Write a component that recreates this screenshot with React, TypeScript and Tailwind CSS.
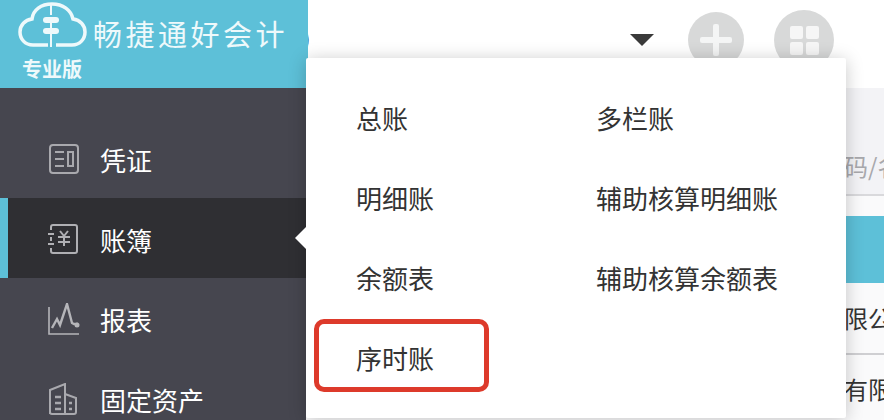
import * as React from "react"

const font = { fontFamily: '"Noto Sans CJK SC", "Noto Sans", sans-serif' }

const IconVoucher = () => (
  <svg width="32" height="32" viewBox="0 0 32 32" fill="none" stroke="#a9a9ae" strokeWidth="2">
    <rect x="2" y="2" width="28" height="28" rx="3" />
    <path d="M7 9h9M7 16h9M7 23h9" />
    <rect x="20" y="9" width="5" height="14" />
  </svg>
)

const IconBook = () => (
  <svg width="32" height="32" viewBox="0 0 32 32" fill="none" stroke="#b0b0b4" strokeWidth="2">
    <path d="M3 7V4a2 2 0 0 1 2-2h22a2 2 0 0 1 2 2v24a2 2 0 0 1-2 2H5a2 2 0 0 1-2-2v-3" />
    <path d="M0 11h6M0 21h6M3 14v4" />
    <path d="M12 8l4 5 4-5M10 14h12M10 19h12M16 13v10" />
  </svg>
)

const IconChart = () => (
  <svg width="32" height="32" viewBox="0 0 32 32" fill="none" stroke="#b5b5b9" strokeWidth="2.4">
    <path d="M1 4v27h30" strokeWidth="1.6" />
    <path d="M4 25l5-9 3 6 7-21 5 19 2 1h4" />
    <circle cx="29" cy="22" r="2.5" fill="#b5b5b9" stroke="none" />
  </svg>
)

const IconBuilding = () => (
  <svg width="30" height="32" viewBox="0 0 30 32" fill="none" stroke="#a9a9ae" strokeWidth="2">
    <path d="M2 31V7l15-6v30M17 11l11 4v14a2 2 0 0 1-2 2H4a2 2 0 0 1-2-2" />
    <path d="M7 14h6M7 20h6M7 26h6M21 20h3M21 26h3" strokeWidth="2.5" />
  </svg>
)

const CloudLogo = () => (
  <svg width="70" height="48" viewBox="0 0 70 48" fill="none" stroke="#eef9fb" strokeWidth="3.5">
    <path d="M30 44H15C7 44 2 38 2 31c0-7 5-12 12-13C15 9 23 3 34 3c11 0 19 6 21 15 7 1 12 6 12 13 0 7-5 13-13 13H38" />
    <path d="M33 3v11M33 33v13" strokeWidth="2" />
    <rect x="25" y="16" width="16" height="6" rx="3" fill="#eef9fb" stroke="none" />
    <rect x="25" y="27" width="16" height="6" rx="3" fill="#eef9fb" stroke="none" />
    <path d="M33 22v5" strokeWidth="2" />
  </svg>
)

const menu = [
  { label: "凭证", icon: <IconVoucher /> },
  { label: "账簿", icon: <IconBook />, active: true },
  { label: "报表", icon: <IconChart /> },
  { label: "固定资产", icon: <IconBuilding /> },
]

const items = ["总账", "多栏账", "明细账", "辅助核算明细账", "余额表", "辅助核算余额表", "序时账"]

const App = () => {
  return (
    <div className="relative flex h-[420px] w-[884px] overflow-hidden bg-white" style={font}>
      <aside className="z-10 flex h-full w-[306px] shrink-0 flex-col bg-[#46464f]">
        <div className="h-[88px] w-[308px] shrink-0 bg-[#5dc0d8] pl-[18px] pt-[1px] text-[#eef9fb]">
          <div className="flex items-center">
            <CloudLogo />
            <span className="ml-[5px] mt-[17px] text-[29px] leading-none tracking-[3.5px]">畅捷通好会计</span>
          </div>
          <p className="ml-[4px] mt-[9px] text-[20px] leading-[22px] font-bold">专业版</p>
        </div>
        <nav className="pt-[30px]">
          {menu.map((m) => (
            <div
              key={m.label}
              className={
                m.active
                  ? "flex h-20 items-center border-l-8 border-[#5dc0d8] bg-[#2f2f33] pl-[40px]"
                  : "flex h-20 items-center pl-[48px]"
              }
            >
              <span className="mt-[2px] flex w-[52px] shrink-0">{m.icon}</span>
              <span className="mt-[4px] text-[26px] leading-none text-white">{m.label}</span>
            </div>
          ))}
        </nav>
      </aside>

      <main className="min-w-0 flex-1">
        <div className="flex h-[88px] items-start justify-end pr-[50px] pt-[10px] shadow-[0_4px_12px_rgba(0,0,0,0.06)]">
          <span className="-ml-[4px] mr-auto mt-[16px] text-[24px] leading-none font-medium text-[#222]">)</span>
          <span className="mr-[34px] mt-[24px] h-0 w-0 border-x-[12px] border-t-[12px] border-x-transparent border-t-[#3a3a3a]" />
          <span className="mr-[30px] mt-[2px] flex h-[56px] w-[56px] items-center justify-center rounded-full bg-[#d8d9d9]">
            <svg width="34" height="34" viewBox="0 0 34 34" fill="#f4f5f5">
              <rect x="14" y="1" width="6" height="32" rx="2" />
              <rect x="1" y="14" width="32" height="6" rx="2" />
            </svg>
          </span>
          <span className="flex h-[60px] w-[60px] items-center justify-center rounded-full bg-[#d8d9d9]">
            <span className="grid grid-cols-2 gap-[3px]">
              <span className="h-[13px] w-[13px] rounded-[2px] bg-[#f6f6f6]" />
              <span className="h-[13px] w-[13px] rounded-[2px] bg-[#f6f6f6]" />
              <span className="h-[13px] w-[13px] rounded-[2px] bg-[#f6f6f6]" />
              <span className="h-[13px] w-[13px] rounded-[2px] bg-[#f6f6f6]" />
            </span>
          </span>
        </div>
        <div className="h-[332px] bg-[#fafafb] text-[24px] leading-none whitespace-nowrap">
          <div className="flex h-[108px] items-end border-b-2 border-[#d9d9dc] bg-[#f3f3f6] pb-[16px] pl-[538px] text-[#a8a8ac]">码/名称</div>
          <div className="mt-[20px] h-[67px] bg-[#5dc0d8]" />
          <div className="flex h-[72px] items-center border-b-2 border-[#cfcfd2] pl-[538px] text-[#333]">限公司</div>
          <div className="flex h-[68px] items-center pl-[538px] text-[#333]">有限公司</div>
        </div>
      </main>

      <div className="absolute left-[306px] top-[58px] z-20 h-[360px] w-[540px] rounded-[2px] bg-white pl-[50px] pt-[20px] shadow-[0_2px_18px_rgba(0,0,0,0.22)]">
        <span className="absolute left-[-11px] top-[169px] h-0 w-0 border-y-[11px] border-r-[11px] border-y-transparent border-r-white" />
        <div className="grid grid-cols-[240px_1fr]">
          {items.map((t) => (
            <div key={t} className="flex h-20 items-center text-[26px] leading-none text-[#333]">
              {t}
            </div>
          ))}
        </div>
        <div className="absolute left-[8px] top-[261px] h-[73px] w-[175px] rounded-[10px] border-[5px] border-[#dd3a2b]" />
      </div>
    </div>
  )
}

export default App
